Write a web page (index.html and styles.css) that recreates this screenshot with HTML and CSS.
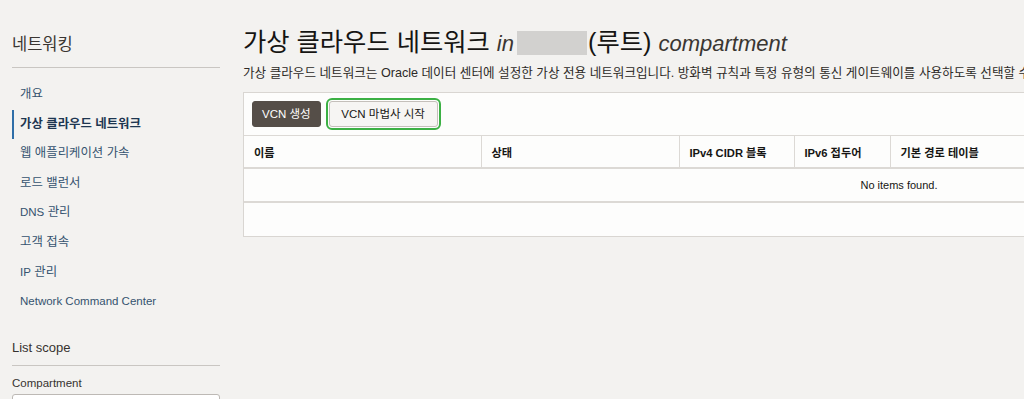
FILE: index.html
```html
<!DOCTYPE html>
<html lang="ko">
<head>
<meta charset="utf-8">
<title>가상 클라우드 네트워크</title>
<link rel="stylesheet" href="styles.css">
</head>
<body>
<div class="page">
  <aside class="sidebar">
    <h2 class="side-title">네트워킹</h2>
    <nav class="nav">
      <a class="nav-item">개요</a>
      <a class="nav-item active">가상 클라우드 네트워크</a>
      <a class="nav-item">웹 애플리케이션 가속</a>
      <a class="nav-item">로드 밸런서</a>
      <a class="nav-item"><span class="en">DNS</span> 관리</a>
      <a class="nav-item">고객 접속</a>
      <a class="nav-item"><span class="en">IP</span> 관리</a>
      <a class="nav-item"><span class="en">Network Command Center</span></a>
    </nav>
    <h3 class="scope-title">List scope</h3>
    <label class="field-label">Compartment</label>
    <div class="select-box"></div>
  </aside>
  <main class="main">
    <h1 class="title">가상 클라우드 네트워크 <em>in</em> <span class="redacted"></span>(루트) <em>compartment</em></h1>
    <p class="desc">가상 클라우드 네트워크는 Oracle 데이터 센터에 설정한 가상 전용 네트워크입니다. 방화벽 규칙과 특정 유형의 통신 게이트웨이를 사용하도록 선택할 수 있습니다.</p>
    <section class="panel">
      <div class="toolbar">
        <button class="btn btn-primary">VCN 생성</button>
        <button class="btn btn-secondary highlighted">VCN 마법사 시작</button>
      </div>
      <table class="grid">
        <colgroup>
          <col class="c1"><col class="c2"><col class="c3"><col class="c4"><col class="c5"><col class="c6"><col class="c7">
        </colgroup>
        <thead>
          <tr>
            <th>이름</th>
            <th>상태</th>
            <th>IPv4 CIDR 블록</th>
            <th>IPv6 접두어</th>
            <th>기본 경로 테이블</th>
            <th>DNS 도메인 이름</th>
            <th>생성됨</th>
          </tr>
        </thead>
        <tbody>
          <tr><td colspan="7" class="empty">No items found.</td></tr>
        </tbody>
      </table>
      <div class="panel-footer"></div>
    </section>
  </main>
</div>
</body>
</html>
```

FILE: styles.css
```css
html, body {
  margin: 0;
  padding: 0;
  background: #f3f2f0;
  overflow: hidden;
}
body {
  font-family: "Liberation Sans", "Noto Sans CJK KR", sans-serif;
  color: #161513;
  width: 1024px;
  height: 399px;
}
.page {
  display: flex;
  align-items: flex-start;
}
.sidebar {
  flex: 0 0 208px;
  margin-left: 12px;
  display: flex;
  flex-direction: column;
}
.side-title {
  margin: 33px 0 0;
  font-size: 16.5px;
  line-height: 22px;
  font-weight: normal;
  color: #3a3632;
  padding-bottom: 12px;
  border-bottom: 1px solid #c9c6c2;
}
.nav {
  margin-top: 12px;
  display: flex;
  flex-direction: column;
}
.nav-item {
  height: 29.6px;
  line-height: 29.6px;
  padding-left: 8px;
  font-size: 12.4px;
  color: #35536f;
  cursor: pointer;
  white-space: nowrap;
}
.nav-item .en {
  font-size: 11.5px;
}
.nav-item.active {
  font-weight: bold;
  color: #1d3651;
  border-left: 2px solid #2f6ea8;
  padding-left: 6px;
}
.scope-title {
  margin: 21px 0 0;
  font-size: 13px;
  line-height: 20px;
  font-weight: normal;
  color: #36322f;
  padding-bottom: 7px;
  border-bottom: 1px solid #c9c6c2;
}
.field-label {
  margin-top: 9px;
  font-size: 11.5px;
  line-height: 16px;
  color: #36322f;
}
.select-box {
  margin-top: 3px;
  height: 30px;
  background: #fff;
  border: 1px solid #bdb9b5;
  border-radius: 3px;
}
.main {
  margin-left: 23px;
  flex: 0 0 auto;
  width: 1320px;
}
.title {
  margin: 26px 0 0;
  font-size: 25.3px;
  line-height: 32px;
  font-weight: normal;
  color: #161513;
  white-space: nowrap;
}
.title em {
  font-style: italic;
  font-size: 22px;
  color: #3a3632;
}
.redacted {
  display: inline-block;
  width: 70px;
  height: 24px;
  vertical-align: -4px;
  background: #d2d1cf;
  margin-left: -4px;
  margin-right: 1px;
}
.desc {
  margin: 4px 0 0;
  font-size: 12.6px;
  line-height: 18px;
  color: #2d2a27;
  white-space: nowrap;
}
.panel {
  margin-top: 10px;
  width: 1310px;
  background: #fdfdfc;
  border: 1px solid #d9d6d2;
}
.toolbar {
  display: flex;
  gap: 8px;
  padding: 8px;
  align-items: center;
}
.btn {
  font-family: inherit;
  font-size: 11.5px;
  height: 26px;
  padding: 0 9px;
  border-radius: 3px;
  cursor: pointer;
  line-height: 24px;
  white-space: nowrap;
}
.btn-primary {
  background: #554e48;
  color: #ffffff;
  border: 1px solid #554e48;
}
.btn-secondary {
  background: #f6f5f3;
  color: #161513;
  border: 1px solid #c4bfba;
  min-width: 109px;
}
.highlighted {
  outline: 2px solid #3bb044;
  outline-offset: 1px;
}
.grid {
  width: 100%;
  border-collapse: collapse;
  table-layout: fixed;
}
.c1 { width: 237px; }
.c2 { width: 198px; }
.c3 { width: 115px; }
.c4 { width: 96px; }
.c5 { width: 220px; }
.c6 { width: 220px; }
.c7 { width: auto; }
.grid th {
  height: 31px;
  text-align: left;
  font-size: 11.2px;
  font-weight: bold;
  color: #161513;
  padding: 0 10px;
  border-top: 1px solid #dcd9d5;
  border-bottom: 2px solid #dcd9d5;
  border-right: 1px solid #dcd9d5;
  white-space: nowrap;
}
.grid th:last-child {
  border-right: none;
}
.grid td.empty {
  height: 32px;
  text-align: center;
  font-size: 11px;
  color: #161513;
  border-bottom: 2px solid #dcd9d5;
  padding: 0;
}
.panel-footer {
  height: 33px;
}
```
